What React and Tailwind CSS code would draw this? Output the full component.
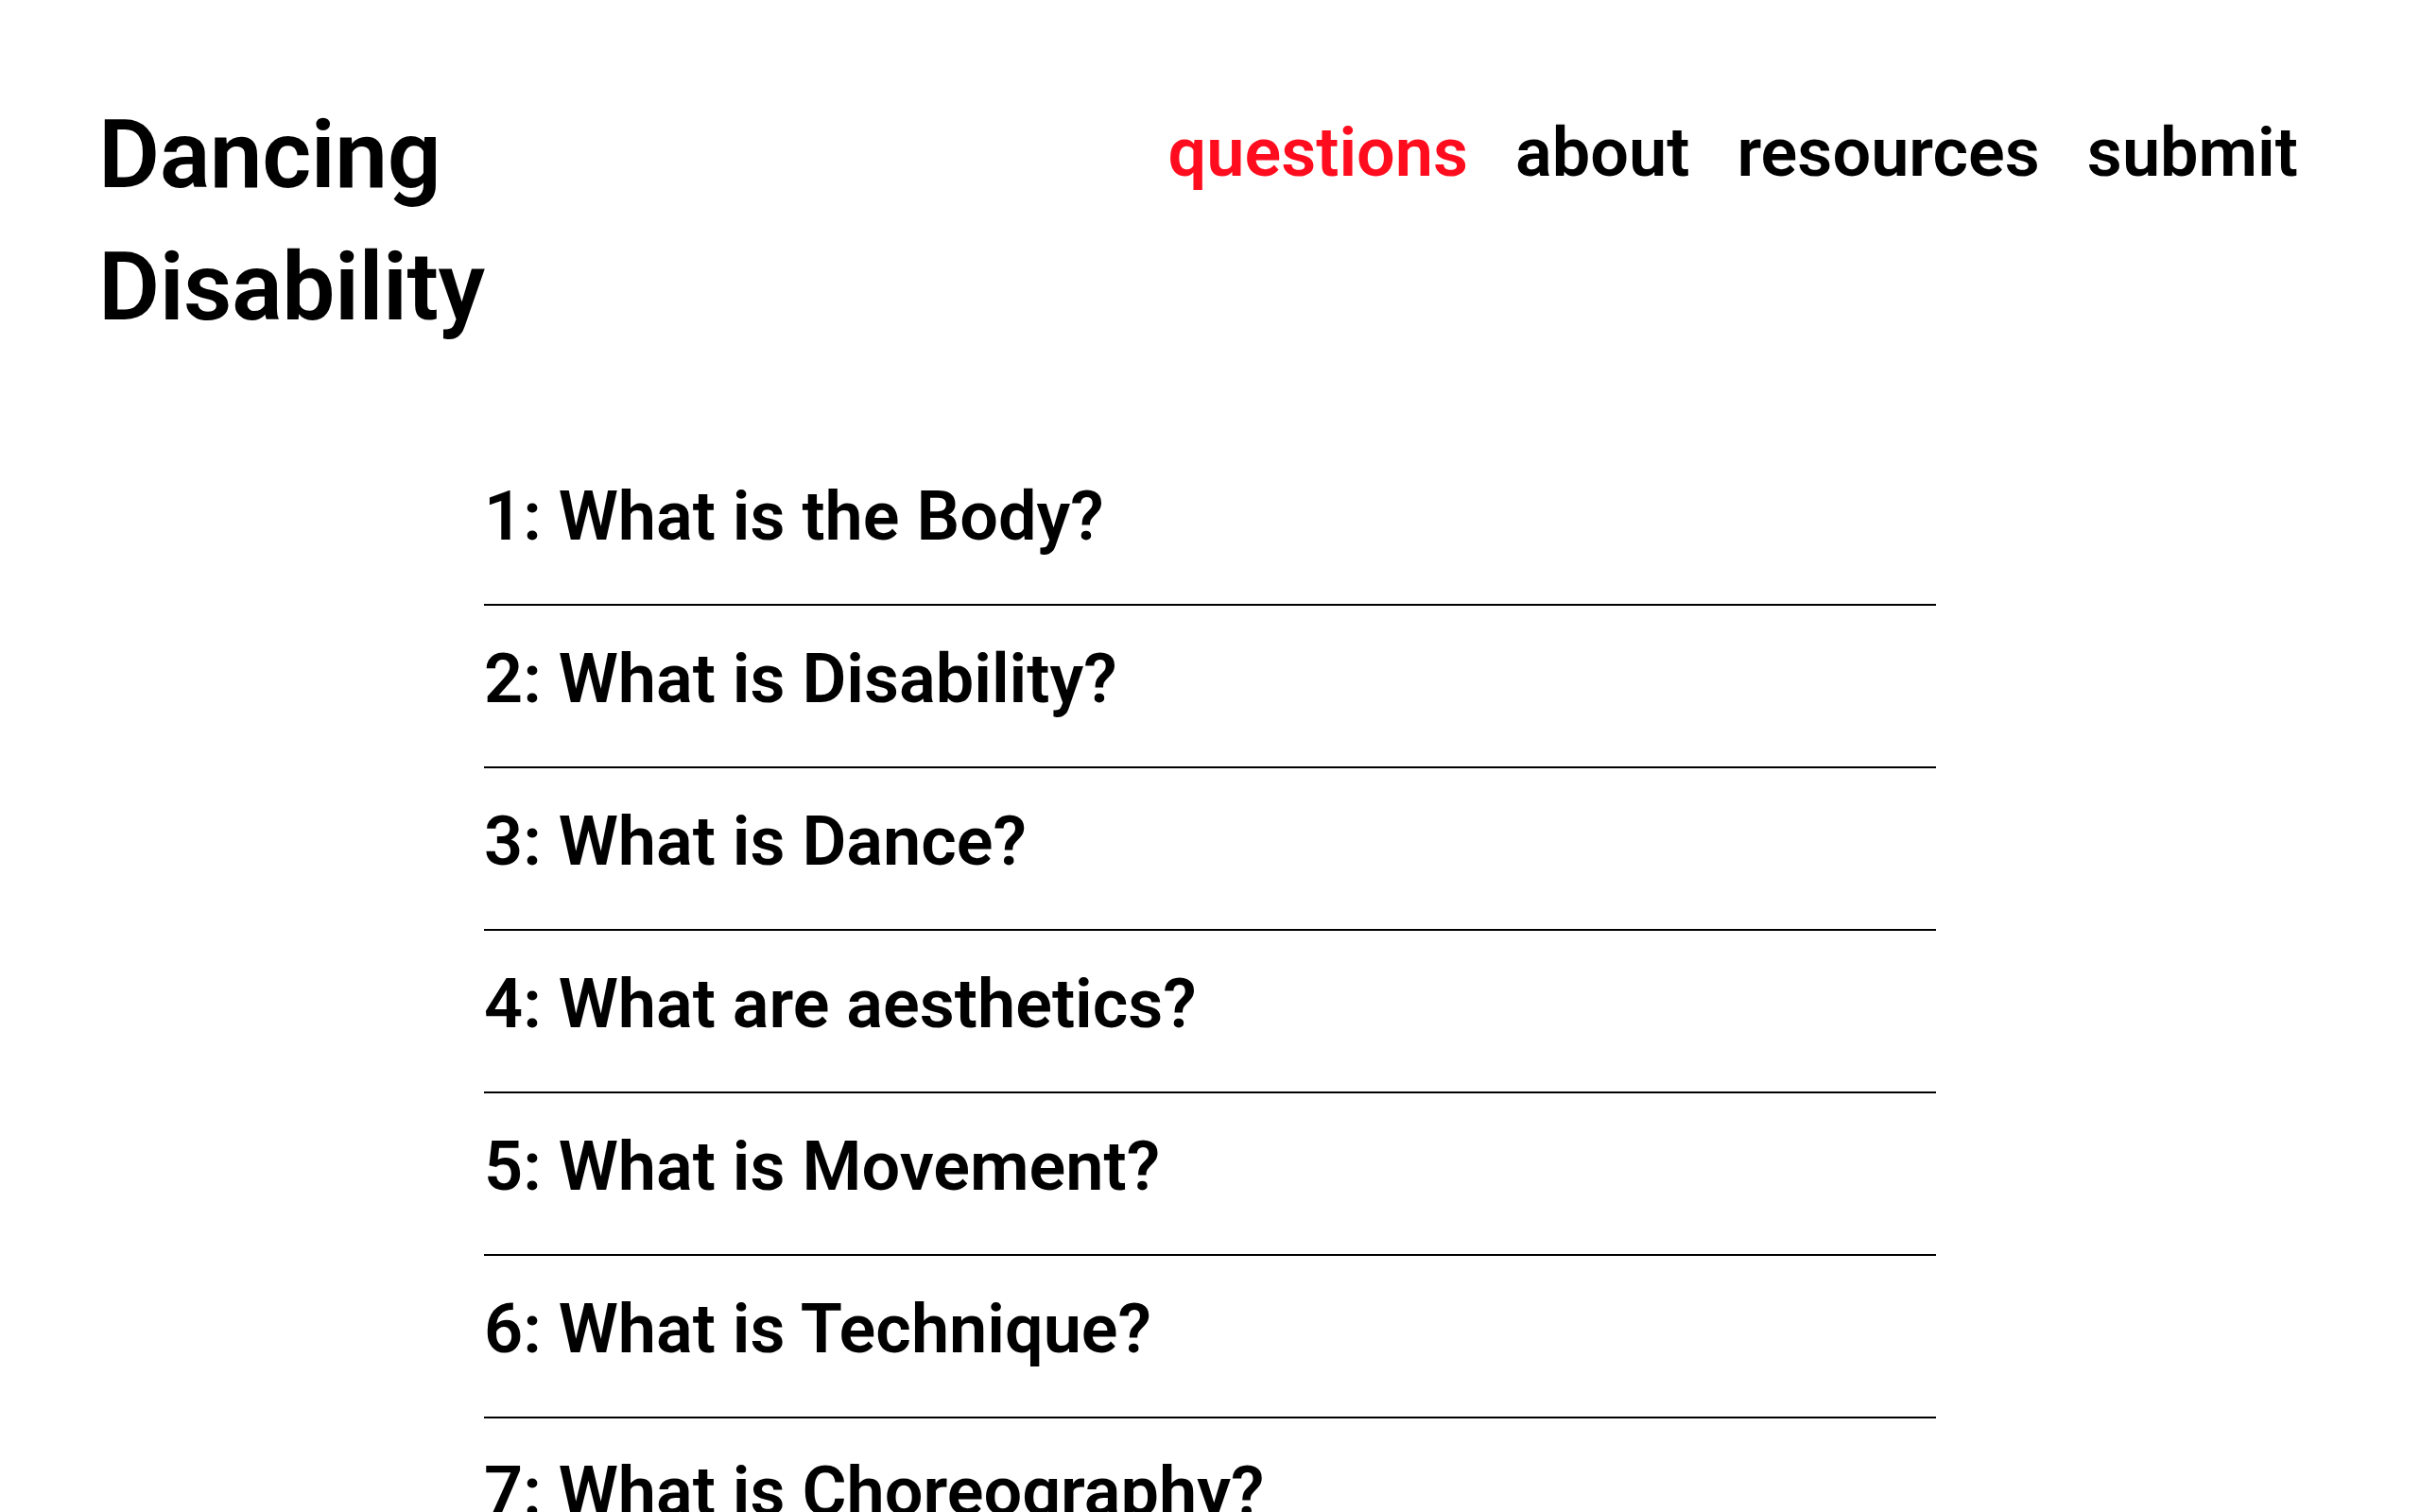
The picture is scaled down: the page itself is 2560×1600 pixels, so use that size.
import React from 'react';

const preguntas = [
  'What is the Body?',
  'What is Disability?',
  'What is Dance?',
  'What are aesthetics?',
  'What is Movement?',
  'What is Technique?',
  'What is Choreography?',
];

const enlaces = [
  { label: 'questions', activo: true },
  { label: 'about' },
  { label: 'resources' },
  { label: 'submit' },
];

export default function App() {
  return (
    <div className="min-h-screen bg-white text-black font-['Roboto',sans-serif] font-semibold">
      <header className="flex justify-between items-start pl-[104px] pr-[129px] pt-[94px]">
        <h1 className="text-[100px] leading-[140px] tracking-[-0.5px] font-semibold">
          Dancing
          <br />
          Disability
        </h1>
        <nav className="flex gap-[50px] mt-[25px] text-[72px] leading-[86px]">
          {enlaces.map(e => (
            <a key={e.label} href="#" className={e.activo ? 'text-[#ff0d1e]' : 'text-black'}>
              {e.label}
            </a>
          ))}
        </nav>
      </header>

      <ul className="w-[1536px] mx-auto mt-[95px]">
        {preguntas.map((p, i) => (
          <li key={i} className="pt-[35px] pb-[49px] border-b-2 border-black text-[72px] leading-[86px] whitespace-nowrap">
            {i + 1}: {p}
          </li>
        ))}
      </ul>
    </div>
  );
}
